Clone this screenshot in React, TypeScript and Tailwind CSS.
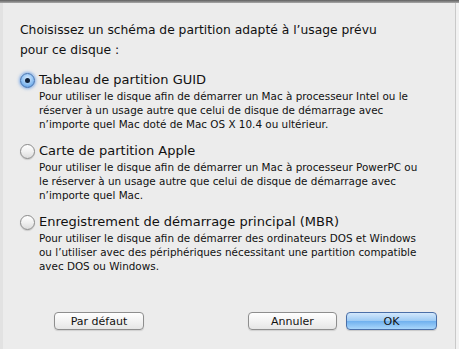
import React from "react"

type Option = {
  title: string
  lines: string[]
  selected?: boolean
}

const options: Option[] = [
  {
    title: "Tableau de partition GUID",
    lines: [
      "Pour utiliser le disque afin de démarrer un Mac à processeur Intel ou le",
      "réserver à un usage autre que celui de disque de démarrage avec",
      "n’importe quel Mac doté de Mac OS X 10.4 ou ultérieur.",
    ],
    selected: true,
  },
  {
    title: "Carte de partition Apple",
    lines: [
      "Pour utiliser le disque afin de démarrer un Mac à processeur PowerPC ou",
      "le réserver à un usage autre que celui de disque de démarrage avec",
      "n’importe quel Mac.",
    ],
  },
  {
    title: "Enregistrement de démarrage principal (MBR)",
    lines: [
      "Pour utiliser le disque afin de démarrer des ordinateurs DOS et Windows",
      "ou l’utiliser avec des périphériques nécessitant une partition compatible",
      "avec DOS ou Windows.",
    ],
  },
]

function Radio({ selected }: { selected?: boolean }) {
  if (selected) {
    return (
      <div className="w-[15px] h-[15px] rounded-full border border-[#3f6fb0] bg-[radial-gradient(circle_at_50%_35%,#d7ebff_0%,#8ec0f2_55%,#4f8fd8_100%)] shadow-[0_0_3px_1px_rgba(90,150,230,0.7)] flex items-center justify-center">
        <div className="w-[5px] h-[5px] rounded-full bg-[#10213a]" />
      </div>
    )
  }
  return (
    <div className="w-[15px] h-[15px] rounded-full border border-[#8a8a8a] bg-[linear-gradient(#ffffff,#f0f0f0_50%,#dcdcdc)] shadow-[0_1px_1px_rgba(0,0,0,0.15)]" />
  )
}

export default function App() {
  return (
    <div
      className="w-[459px] h-[349px] bg-[#ececec] flex flex-col overflow-hidden text-[#111]"
      style={{ fontFamily: '"Lucida Grande", "DejaVu Sans", sans-serif' }}
    >
      {/* top shadow edge of the sheet */}
      <div className="h-[3px] bg-[linear-gradient(#5f5f5f,#a9a9a9)]" />
      <div className="flex-1 flex">
        <div className="w-[3px] bg-[#e2e2e2]" />
        <div className="flex-1 flex flex-col pl-[17px] pr-[18px]">
          <p className="mt-[17px] text-[12.3px] leading-[20px]">
            Choisissez un schéma de partition adapté à l’usage prévu
            <br />
            pour ce disque :
          </p>

          <div className="mt-[11px] flex flex-col gap-[11px]">
            {options.map((o) => (
              <div key={o.title} className="flex flex-col">
                <div className="flex items-center gap-[4px]">
                  <Radio selected={o.selected} />
                  <span className="text-[13px] leading-[18px]">{o.title}</span>
                </div>
                <div className="pl-[19px] text-[10.4px] leading-[14px] whitespace-nowrap">
                  {o.lines.map((l) => (
                    <div key={l}>{l}</div>
                  ))}
                </div>
              </div>
            ))}
          </div>

          <div className="mt-auto mb-[19px] flex items-center">
            <button className="ml-[34px] w-[90px] h-[18px] rounded-[4px] border border-[#8e8e8e] bg-[linear-gradient(#ffffff,#f3f3f3_50%,#e6e6e6)] text-[11px] leading-none shadow-[0_1px_1px_rgba(0,0,0,0.12)]">
              Par défaut
            </button>
            <button className="ml-auto w-[89px] h-[18px] rounded-[4px] border border-[#8e8e8e] bg-[linear-gradient(#ffffff,#f3f3f3_50%,#e6e6e6)] text-[11px] leading-none shadow-[0_1px_1px_rgba(0,0,0,0.12)]">
              Annuler
            </button>
            <button className="ml-[9px] w-[91px] h-[18px] rounded-[4px] border border-[#4a6fa8] bg-[linear-gradient(#d3e8fc,#9ccaf4_50%,#6fb0ee_51%,#a9d6fb)] text-[11px] leading-none shadow-[0_1px_1px_rgba(0,0,0,0.15)]">
              OK
            </button>
          </div>
        </div>
        <div className="w-[4px] border-l border-[#c9c9c9] bg-[#f2f2f2]" />
      </div>
    </div>
  )
}
